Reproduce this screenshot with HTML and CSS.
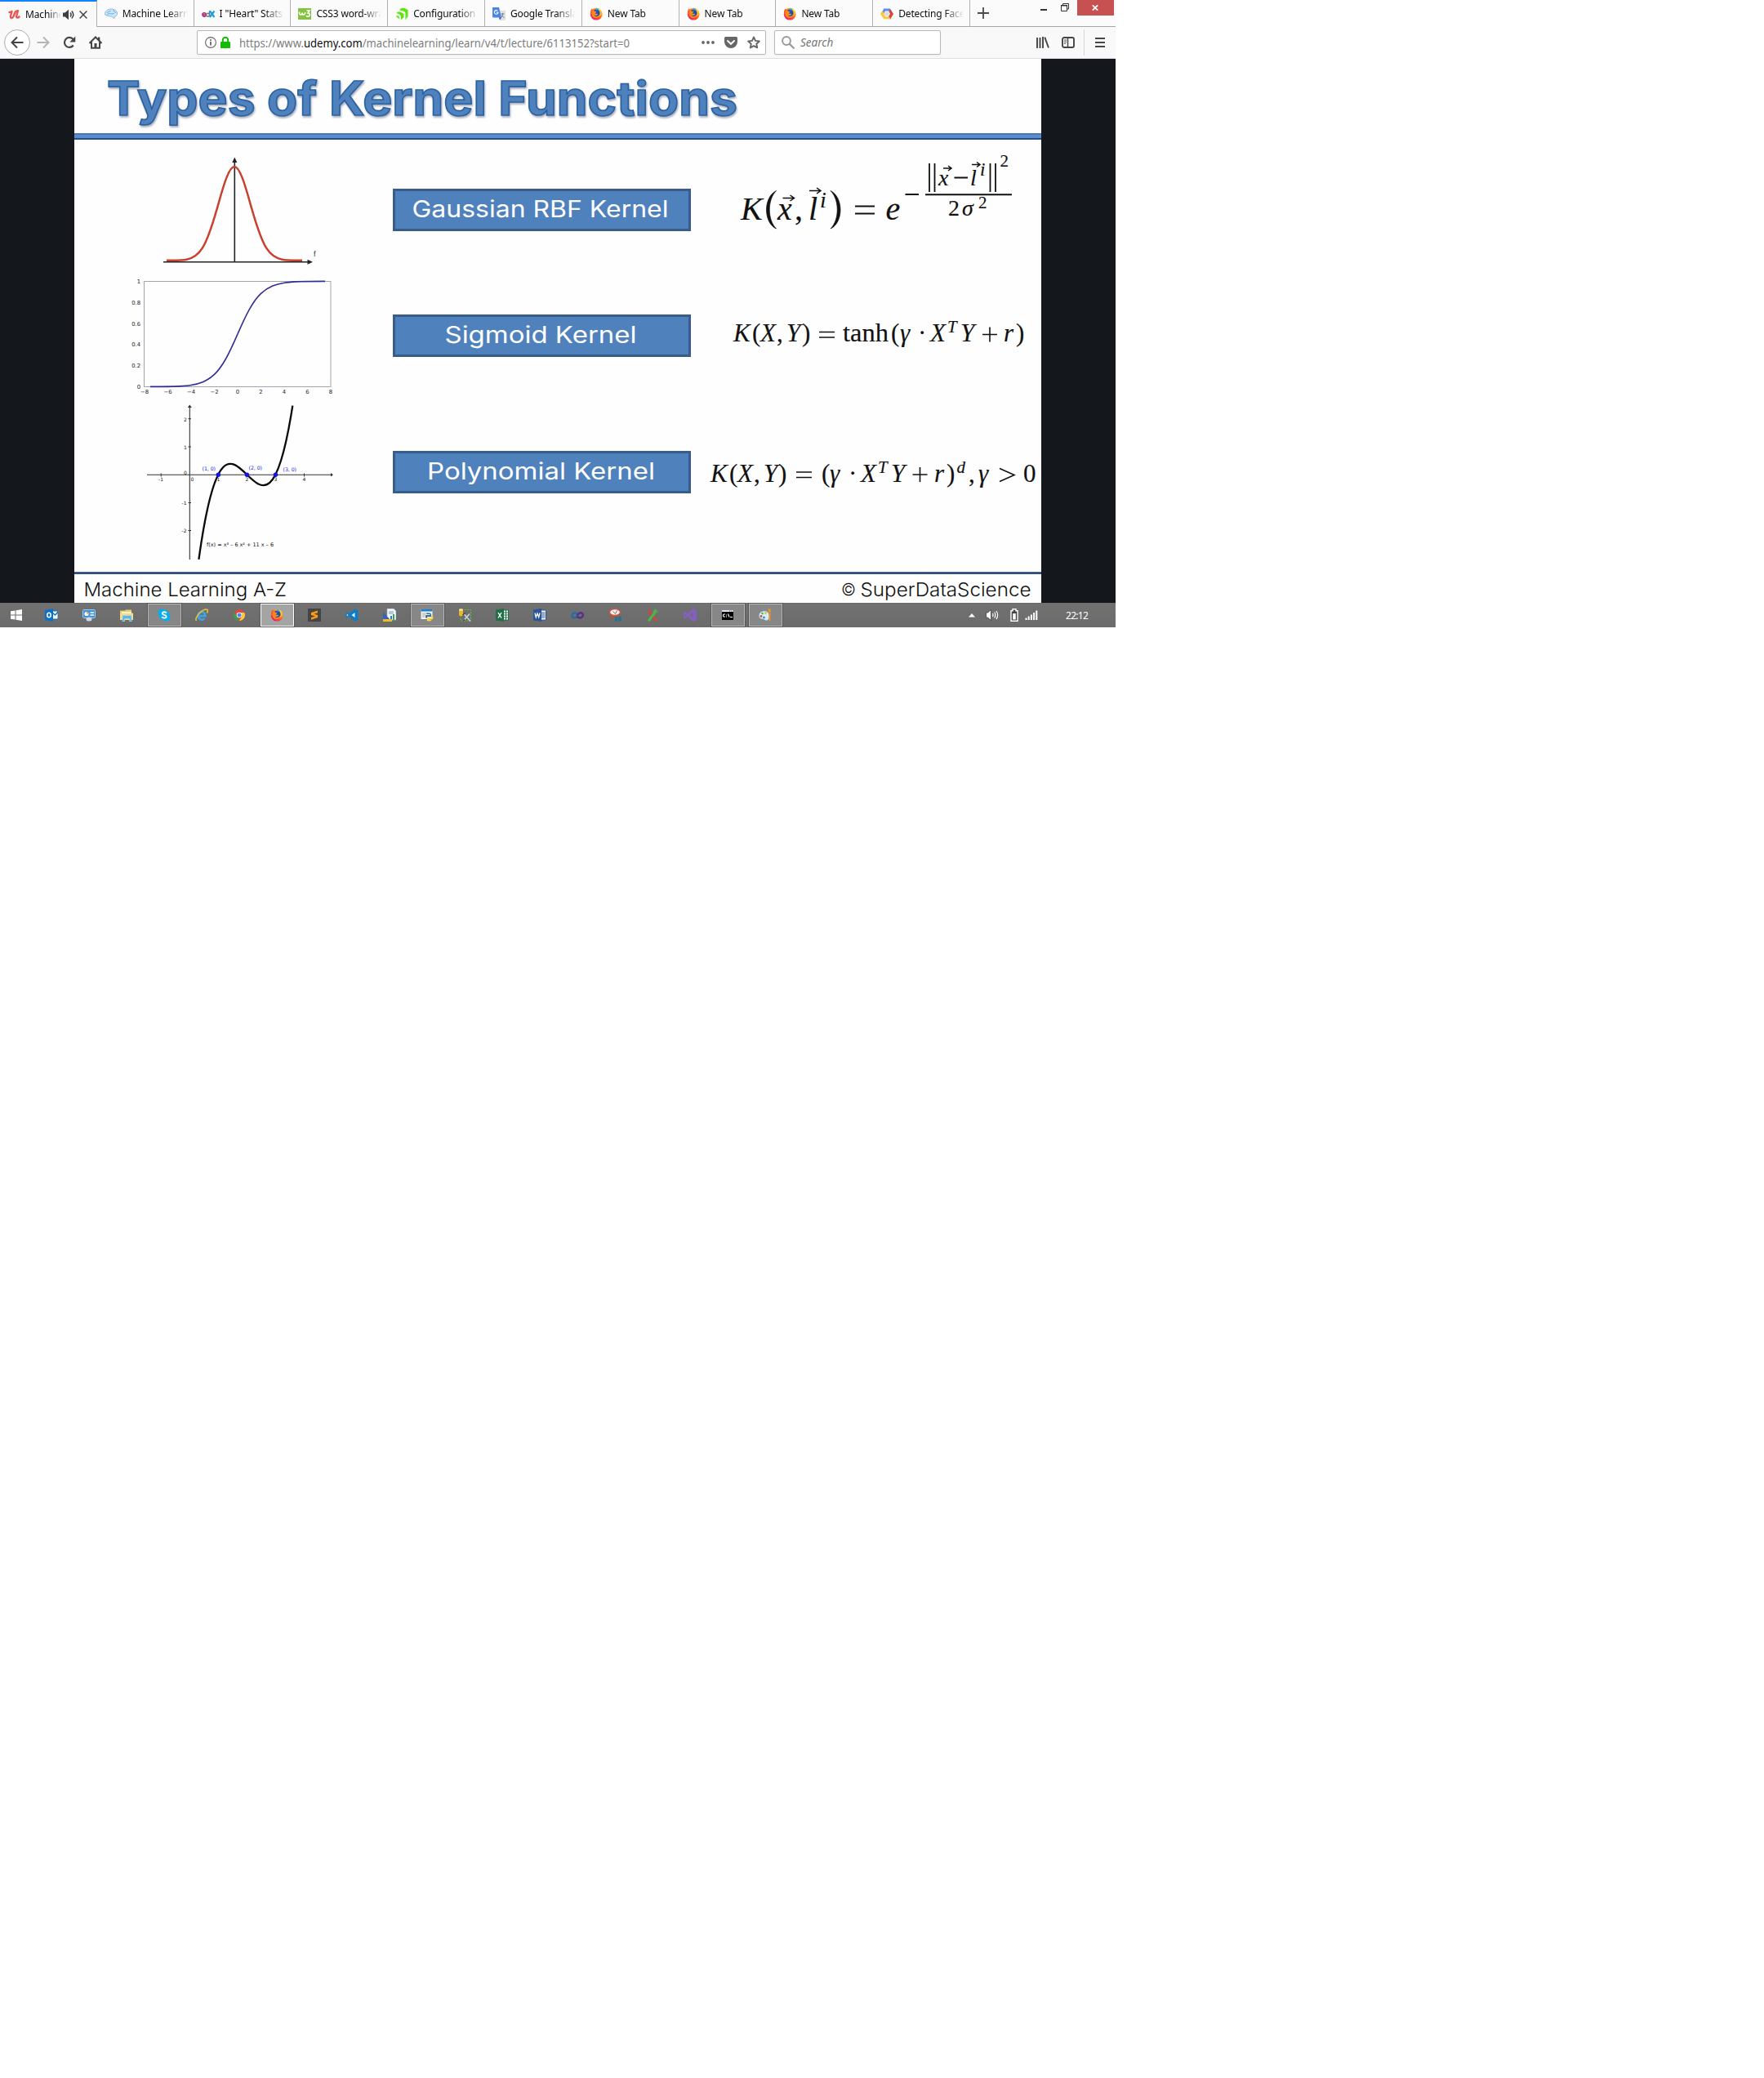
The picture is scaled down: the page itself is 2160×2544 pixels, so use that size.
FILE: index.html
```html
<!DOCTYPE html>
<html lang="en">
<head>
<meta charset="utf-8">
<title>Machine Learning A-Z</title>
<link rel="stylesheet" href="styles.css">
</head>
<body>
<svg class="defs" width="0" height="0" aria-hidden="true">
  <defs>
    <radialGradient id="foxg" cx="0.75" cy="0.2" r="0.95"><stop offset="0" stop-color="#ffe226"/><stop offset="0.4" stop-color="#ff9a18"/><stop offset="0.75" stop-color="#ff3b3b"/><stop offset="1" stop-color="#e3127c"/></radialGradient>
    <symbol id="firefox" viewBox="0 0 16 16">
      <circle cx="8.2" cy="8.2" r="7.4" fill="url(#foxg)"/>
      <path d="M1 8C.6 4.500 1.800 2.600 3 1.300c0 .9.2 1.300.6 1.700L1.800 9z" fill="#ff5a22"/>
      <circle cx="8.300" cy="6.800" r="4.300" fill="#1c4fb4"/>
      <path d="M8 .8c2 .3 3.600 1.500 4 3.200-1.500-.7-2.800-1-4-.2z" fill="#38a9f0"/>
      <path d="M3.200 4.200c1.300-.5 2.300-.2 3.100.5 1.200 0 2 .3 2.200.8-.4.900-1.500 1.100-2 1.900.8.800 2.200.2 3.200.5.5.2.400.700 0 1-1 .9-3 1.500-4.300.7.700 1.700 3.500 2.300 5.600 1C10 13.500 5.500 13.800 3.600 11 2.300 9 2.300 6.300 3.200 4.200z" fill="#ff8a1c"/>
      <path d="M10.500 2.500c2.600 1.800 3.300 5.200 1.600 8.200 1.300-.7 2-1.600 2.300-2.700C14.500 5.300 13 3 10.500 2.500z" fill="#ffc51f"/>
    </symbol>
  </defs>
</svg>

<div class="screen">
  <header class="browser">
    <div class="tabs">
      <div class="tab active">
        <svg class="fav" viewBox="0 0 16 16"><path d="M1.500 5.500 5.500 4 4 9.500c-.5 3 2 3.500 3.500.5L10 4l3-1-1.800 6.500c-.5 3 2 2.800 4 .3" fill="none" stroke="#eb5252" stroke-width="2.300" stroke-linejoin="round"/></svg>
        <span class="label">Machine Learning</span>
        <svg class="sound" viewBox="0 0 14 14"><path d="M0 4.500h2.600L7 .8v12.400L2.600 9.500H0z" fill="#3f3f3f"/><path d="M9 4.500c1.300 1.500 1.300 3.500 0 5M10.800 2.600c2.500 2.700 2.500 6.100 0 8.800" fill="none" stroke="#3f3f3f" stroke-width="1.500"/></svg>
        <svg class="x" viewBox="0 0 10 10"><path d="M.6.6 9.400 9.400M9.400.6.6 9.400" stroke="#3f3f3f" stroke-width="1.400"/></svg>
      </div>
      <div class="tab">
        <svg class="fav" viewBox="0 0 16 16"><path d="M.5 9C0 4.500 4 2 8 2c5 0 8 2.500 7.500 6.500-.5 2-2.500 2-3 3.500l-1 2-1.500-2.500C7 10.500 4 11 .5 9z" fill="#cfe6f6" stroke="#86bde4"/><path d="M3 7c1-3 4-1 5-3M6 8c2-1 4 1 6-1M10 4c2 0 3 1 3.500 3M3 9l3-2" fill="none" stroke="#5fa3d6" stroke-width=".9"/></svg>
        <span class="label">Machine Learning</span>
      </div>
      <div class="tab">
        <svg class="fav" viewBox="0 0 16 16"><path d="M1 9h4c0-3-4-3-4 0 0 2.600 3 2.600 4 1.300" fill="none" stroke="#b4246f" stroke-width="1.700"/><circle cx="7.600" cy="9.300" r="2" fill="none" stroke="#7c7c86" stroke-width="1.500"/><path d="M9.500 4v7" stroke="#7c7c86" stroke-width="1.400"/><path d="M10 4.500 15.500 12M15.500 4.500 9.800 12" stroke="#1a9fe0" stroke-width="2.200"/></svg>
        <span class="label">I "Heart" Stats: Learn</span>
      </div>
      <div class="tab">
        <svg class="fav" viewBox="0 0 16 16"><path d="M0 1h16v14H0z" fill="#84c341"/><path d="M1.500 5.500c0 5 3.500 4 3.500 1 0 3 3.500 4 3.700-.5M10.500 4H14l-2 3c3 0 3 4 0 4.300-1 0-1.500-.3-2-1" fill="none" stroke="#fff" stroke-width="1.500"/></svg>
        <span class="label">CSS3 word-wrap</span>
      </div>
      <div class="tab">
        <svg class="fav" viewBox="0 0 16 16"><path d="M5 3.500C6 1.500 8 .5 10.500.8L15.500 3v8l-3 4.500V6.500L10 4.500z" fill="#5be60e"/><path d="M1.500 7C3 5.500 5 5.300 7 6l3.500 2v4L7 15.500v-5L5 8.500z" fill="#5be60e"/><path d="M.8 11c1.200-1 2.500-.9 3.700 0l.7 3.500z" fill="#5be60e"/></svg>
        <span class="label">Configuration · webpack</span>
      </div>
      <div class="tab">
        <svg class="fav" viewBox="0 0 16 16"><path d="M7 4h9v12H9z" fill="#dfe0e3"/><path d="M10.500 8h4M12.500 7v1c0 2-1 4-2.500 5M11 9.500l3.500 3.500" stroke="#6f8490" stroke-width="1" fill="none"/><path d="M0 0h8l3 12.500H1.200Q0 12.500 0 11z" fill="#4a86ea"/><path d="M8 12.500h3L9 15.500z" fill="#2d4fb5"/><path d="M6.300 4.300a2.300 2.300 0 1 0 .6 2H4.800" fill="none" stroke="#fff" stroke-width="1.100"/></svg>
        <span class="label">Google Translate</span>
      </div>
      <div class="tab"><svg class="fav"><use href="#firefox"/></svg><span class="label">New Tab</span></div>
      <div class="tab"><svg class="fav"><use href="#firefox"/></svg><span class="label">New Tab</span></div>
      <div class="tab"><svg class="fav"><use href="#firefox"/></svg><span class="label">New Tab</span></div>
      <div class="tab">
        <svg class="fav" viewBox="0 0 16 16"><path d="M4.200 1.500h7.600l1.900 3.300-2.300 1.400L10 4.500H6L4.500 7.500 2 6z" fill="#5a8ff0"/><path d="M12.200 2.200 16 8l-3.800 6.500L9.500 12l2.500-4-1.500-3z" fill="#dc4437"/><path d="M0 8 2.200 4.500 5 7l-.7 1L6.200 11.500H11l1 2.800H4.200z" fill="#f8c73a"/><circle cx="8" cy="8" r="2.800" fill="#d9dce2"/></svg>
        <span class="label">Detecting Faces</span>
      </div>
      <div class="tabend">
        <svg class="plus" viewBox="0 0 14 14"><path d="M7 0v14M0 7h14" stroke="#4a4a4a" stroke-width="1.800"/></svg>
        <svg class="min" viewBox="0 0 8 2"><path d="M0 0h8v2H0z" fill="#333"/></svg>
        <svg class="restore" viewBox="0 0 10 10"><path d="M.5 3h7v6.500h-7zM2.500 2.500V.5h7V7H8" fill="none" stroke="#333"/><path d="M0 2.500h8" stroke="#333"/></svg>
        <div class="close"><svg viewBox="0 0 8 7" width="8" height="7"><path d="M.8.3 7.200 6.700M7.200.3.8 6.700" stroke="#fff" stroke-width="1.700"/></svg></div>
      </div>
    </div>
    <div class="nav">
      <div class="back"><svg viewBox="0 0 16 16"><path d="M15.500 8H1.500M8 1.500 1.500 8 8 14.500" fill="none" stroke="#454545" stroke-width="2"/></svg></div>
      <svg class="ic fwd" viewBox="0 0 16 16"><path d="M.5 8h14M8 1.500 14.500 8 8 14.500" fill="none" stroke="#b5b5b5" stroke-width="2"/></svg>
      <svg class="ic reload" viewBox="0 0 16 16"><path d="M12.800 11.500A6 6 0 1 1 12.500 4" fill="none" stroke="#454545" stroke-width="2.200"/><path d="M15.300.5v7h-7z" fill="#454545"/></svg>
      <svg class="ic home" viewBox="0 0 16 16"><path d="M.5 9 8 1.500 15.500 9M3 7.500v7.300h10V7.500" fill="none" stroke="#454545" stroke-width="2"/><path d="M6.500 9h3v6h-3zM11 1.500h2.300V6L11 4z" fill="#454545"/></svg>
      <div class="urlbar">
        <svg class="info" viewBox="0 0 14 14"><circle cx="7" cy="7" r="6.400" fill="none" stroke="#666" stroke-width="1.100"/><path d="M6.100 6h1.800v4.500H6.100zM6.100 3.200h1.800V5H6.100z" fill="#666"/></svg>
        <svg class="lock" viewBox="0 0 12 14"><path d="M2.800 7V4a3.200 3.200 0 0 1 6.400 0v3" fill="none" stroke="#12bc00" stroke-width="2"/><rect y="6" width="12" height="8" rx="1" fill="#12bc00"/></svg>
        <svg class="url" width="560" height="28" viewBox="293 38 560 28"><text x="293" y="58" textLength="478" lengthAdjust="spacingAndGlyphs">https://www.<tspan class="host">udemy.com</tspan>/machinelearning/learn/v4/t/lecture/6113152?start=0</text></svg>
        <svg class="dots" viewBox="0 0 16 4"><circle cx="2" cy="2" r="1.900"/><circle cx="8" cy="2" r="1.900"/><circle cx="14" cy="2" r="1.900"/></svg>
        <svg class="pocket" viewBox="0 0 16 14"><path d="M1.500 0h13Q16 0 16 1.500V6a8 8 0 0 1-16 0V1.500Q0 0 1.500 0z" fill="#666"/><path d="m4 5 4 3.800L12 5" fill="none" stroke="#fff" stroke-width="2" stroke-linecap="round"/></svg>
        <svg class="star" viewBox="0 0 16 16"><path d="m8 1.500 2 4.400 4.800.6-3.500 3.200.9 4.700L8 12.100l-4.200 2.300.9-4.700L1.200 6.500 6 5.900z" fill="none" stroke="#666" stroke-width="1.900" stroke-linejoin="round"/></svg>
      </div>
      <div class="search">
        <svg class="lens" viewBox="0 0 16 16"><circle cx="6" cy="6" r="4.900" fill="none" stroke="#999" stroke-width="2"/><path d="m9.600 9.600 5.900 5.900" stroke="#999" stroke-width="2.200"/></svg>
        <span>Search</span>
      </div>
      <svg class="lib" viewBox="0 0 16 14"><path d="M1 1v13M4.500 1v13M8 0v14M10.300.6 15 13.500" stroke="#454545" stroke-width="1.900"/></svg>
      <svg class="side" viewBox="0 0 16 14"><rect x="1" y="1" width="14" height="12" rx="2" fill="none" stroke="#454545" stroke-width="1.900"/><path d="M7.500 1v12" stroke="#454545" stroke-width="1.500"/><path d="M3 4h3M3 6.200h3M3 8.400h2" stroke="#454545"/></svg>
      <i class="vsep"></i>
      <svg class="menu" viewBox="0 0 12 12"><path d="M0 1h12M0 6h12M0 11h12" stroke="#454545" stroke-width="2"/></svg>
    </div>
  </header>

  <main class="player">
    <section class="slide">
      <svg class="title" width="1184" height="91" viewBox="91 72 1184 91"><text x="131" y="140.500" textLength="772" lengthAdjust="spacingAndGlyphs">Types of Kernel Functions</text></svg>
      <div class="rule"></div>
      <div class="body">
        <svg class="charts" width="369" height="529" viewBox="91 171 369 529">
          <path d="M287.300 320.500V199" stroke="#222" stroke-width="1.600"/>
          <path d="m287.300 192.500 3 6.500h-6zM383 320.800l-6.500-3v6z" fill="#222"/>
          <path d="M200 320.800h178" stroke="#222" stroke-width="1.500"/>
          <path d="M204 318.700C214 318.700 222 319 228.500 317.700 235 316.400 241.500 313.800 248 303.400 254.500 293 261 272.600 267.500 249.300 274 226 280.500 204 287 204S300 226 306.500 249.300C313 272.600 319.500 293 326 303.400 332.500 313.800 339 316.400 345.500 317.700 352 319 360 318.700 370 318.700" fill="none" stroke="#c8402e" stroke-width="2.500"/>
          <text class="f" x="384" y="314">f</text>
          <rect x="176.500" y="344.500" width="228.500" height="129" fill="none" stroke="#a3a3ad"/>
          <g fill="none" stroke="#322d92" stroke-width="1.600">
            <path id="sg" d="M291 408.900C295.800 397.900 300.500 387.300 305.300 378.800 310.100 370.300 314.700 363.900 319.500 359.400 324.300 354.900 329 352.100 333.800 350.100 338.600 348.100 343.300 347.100 348.100 346.300 352.900 345.500 357.600 345.200 362.400 344.900 374 344.400 386 344.400 398 344.400"/>
            <use href="#sg" transform="rotate(180 291 408.900)"/>
          </g>
          <g class="tick" text-anchor="end"><text x="172" y="346.500">1</text><text x="172" y="372.500">0.8</text><text x="172" y="398.500">0.6</text><text x="172" y="424">0.4</text><text x="172" y="450">0.2</text><text x="172" y="475.500">0</text></g>
          <g class="tick" text-anchor="middle"><text x="177" y="482">−8</text><text x="205.500" y="482">−6</text><text x="234" y="482">−4</text><text x="262.500" y="482">−2</text><text x="291" y="482">0</text><text x="319.500" y="482">2</text><text x="348" y="482">4</text><text x="376.500" y="482">6</text><text x="405" y="482">8</text></g>
          <path d="M180 581.300h226M232.300 685V498" stroke="#333" stroke-width="1.100"/>
          <path d="m229.800 499 2.500-3.500 2.500 3.500zM405 579l3 2.300-3 2.300z" fill="#333"/>
          <path d="M197.200 579.500v4M372.500 579.500v4M230.500 512.700h3.500M230.500 547h3.500M230.500 615.500h3.500M230.500 649.500h3.500" stroke="#333"/>
          <g class="tiny"><text x="194" y="588.500">-1</text><text x="233.500" y="588.500">0</text><text x="265.500" y="588.500">1</text><text x="300.500" y="588.500">2</text><text x="335.500" y="588.500">3</text><text x="370.500" y="588.500">4</text><text x="225" y="515.500">2</text><text x="225" y="550">1</text><text x="225" y="580.500">0</text><text x="222.500" y="618">-1</text><text x="222.500" y="652">-2</text></g>
          <path d="M243.400 684.900C281.700 407.400 320 744.400 358.300 496.600" fill="none" stroke="#0a0a0a" stroke-width="2.300"/>
          <g fill="#1414e6"><circle cx="267.300" cy="581.300" r="2.700"/><circle cx="302.400" cy="581.300" r="2.700"/><circle cx="337.400" cy="581.300" r="2.700"/></g>
          <g class="pt"><text x="247.500" y="576" textLength="16.500">(1, 0)</text><text x="304.500" y="575" textLength="16.500">(2, 0)</text><text x="346.500" y="577" textLength="16.500">(3, 0)</text></g>
          <text class="fx" x="253" y="668.500" textLength="82" lengthAdjust="spacingAndGlyphs">f(x) = x³ – 6 x² + 11 x – 6</text>
        </svg>
        <div class="kernels">
          <div class="kernel"><svg width="359" height="46" viewBox="484 234 359 46"><text x="504.500" y="265.500" textLength="314" lengthAdjust="spacingAndGlyphs">Gaussian RBF Kernel</text></svg></div>
          <div class="kernel"><svg width="359" height="46" viewBox="484 234 359 46"><text x="544.500" y="265.500" textLength="235" lengthAdjust="spacingAndGlyphs">Sigmoid Kernel</text></svg></div>
          <div class="kernel"><svg width="359" height="46" viewBox="484 234 359 46"><text x="523" y="265.500" textLength="279" lengthAdjust="spacingAndGlyphs">Polynomial Kernel</text></svg></div>
        </div>
        <svg class="math" width="419" height="529" viewBox="856 171 419 529">
          <text class="big" y="269"><tspan x="907">K</tspan><tspan x="952">x</tspan><tspan class="up" x="973">,</tspan><tspan x="990">l</tspan><tspan class="i1" x="1004" y="254">i</tspan><tspan x="1084.500" y="269">e</tspan></text>
          <text class="mid" y="226.500"><tspan x="1149">x</tspan><tspan x="1188">l</tspan><tspan class="i2" x="1200" y="215">i</tspan><tspan class="s2" x="1224.500" y="204">2</tspan></text>
          <text class="mid" y="264"><tspan class="up" x="1161">2</tspan><tspan x="1178">σ</tspan><tspan class="s2" x="1198" y="255">2</tspan></text>
          <path d="M950.500 233.500c-16 8-16 39 0 46.500-11-11-11-35.500 0-46.500zM1017 233.500c16 8 16 39 0 46.500 11-11 11-35.500 0-46.500z" fill="#111" stroke="#111" stroke-width=".7"/>
          <path d="M1047 252.500h24M1047 261.500h24M1108.500 238h16.500M1133 238.300h106M1168.500 217.500h16.500" stroke="#111" stroke-width="2"/>
          <path d="M1138 200v35M1144.500 200v35M1212.500 200v35M1219 200v35" stroke="#111" stroke-width="1.800"/>
          <path d="M958.500 242.500h13M967.500 239l5 3.500-5 3.500M991 233.500h13M1000 230l5 3.500-5 3.500M1155 206h9.500M1161 203l4 3-4 3M1190 201.500h9M1196 198.500l4 3-4 3" fill="none" stroke="#111" stroke-width="1.500"/>
          <text class="eq" y="418"><tspan x="898">K</tspan><tspan class="up" x="921">(</tspan><tspan x="931">X</tspan><tspan class="up" x="951">,</tspan><tspan x="963">Y</tspan><tspan class="up" x="982">)</tspan><tspan class="up" x="1032" textLength="56" lengthAdjust="spacingAndGlyphs">tanh</tspan><tspan class="up" x="1091">(</tspan><tspan x="1102">γ</tspan><tspan class="up" x="1124">·</tspan><tspan x="1139">X</tspan><tspan class="sup" x="1160" y="407">T</tspan><tspan x="1176" y="418">Y</tspan><tspan x="1229">r</tspan><tspan class="up" x="1244">)</tspan></text>
          <text class="eq" y="590"><tspan x="870">K</tspan><tspan class="up" x="893">(</tspan><tspan x="903">X</tspan><tspan class="up" x="923">,</tspan><tspan x="935">Y</tspan><tspan class="up" x="953">)</tspan><tspan class="up" x="1006">(</tspan><tspan x="1016">γ</tspan><tspan class="up" x="1039">·</tspan><tspan x="1054">X</tspan><tspan class="sup" x="1075" y="579">T</tspan><tspan x="1091" y="590">Y</tspan><tspan x="1144">r</tspan><tspan class="up" x="1159">)</tspan><tspan class="sup" x="1171.500" y="579">d</tspan><tspan class="up" x="1186" y="590">,</tspan><tspan x="1198">γ</tspan><tspan class="up" x="1253">0</tspan></text>
          <path d="M1003 406.500h19M1003 413h19M1203 409.500h18M1212 400.500v18M975 578h19M975 584.500h19M1117.500 581h18M1126.500 572v18" stroke="#111" stroke-width="1.600"/>
          <path d="m1224 573.500 18 8-18 8" fill="none" stroke="#111" stroke-width="1.600"/>
        </svg>
      </div>
      <div class="footline"></div>
      <svg class="foot" width="1184" height="35" viewBox="91 703 1184 35"><text x="102.500" y="729.800" textLength="248.500" lengthAdjust="spacingAndGlyphs">Machine Learning A-Z</text><text x="1030" y="729" textLength="18" lengthAdjust="spacingAndGlyphs" class="copy">©</text><text x="1053.500" y="729.800" textLength="209" lengthAdjust="spacingAndGlyphs">SuperDataScience</text></svg>
    </section>
  </main>

  <footer class="taskbar">
    <div class="start"><svg viewBox="0 0 16 16"><path d="M1 3.200 6.500 2.400v5H1zM7.500 2.200 15 1v6.400H7.500zM1 8.500h5.500v5L1 12.700zM7.500 8.500H15V15l-7.500-1.200z" fill="#fff"/></svg></div>
    <div class="app"><svg viewBox="0 0 16 16"><path d="M9 3h7v10H9z" fill="#fff" stroke="#0a72c6"/><path d="m9 5 3.500 3L16 4" fill="none" stroke="#0a72c6" stroke-width="1.500"/><path d="M0 2 10 0v16L0 14z" fill="#0a72c6"/><ellipse cx="5" cy="8" rx="2.200" ry="2.800" fill="none" stroke="#fff" stroke-width="1.500"/></svg></div>
    <div class="app"><svg viewBox="0 0 16 16"><rect x=".5" y="1.500" width="15" height="10" rx="1" fill="#3f93dc" stroke="#9dccf2"/><circle cx="5" cy="6.500" r="2.600" fill="#fff"/><path d="M5 6.500V4a2.500 2.500 0 0 1 2.500 2.500z" fill="#f39a28"/><path d="M9.500 5H14M9.500 8H14" stroke="#fff" stroke-width="1.400"/><ellipse cx="8" cy="13" rx="3.500" ry="2.500" fill="#d5d9de"/></svg></div>
    <div class="app"><svg viewBox="0 0 16 16"><path d="M0 2.500h6l1-1h7v4h2V14H0z" fill="#e9cc70"/><path d="M2 4h12v3H2z" fill="#fbf4c4"/><path d="M0 6h16v8H0z" fill="#f2dc8c"/><path d="M3 8.500h11V16h-2.500v-3.500h-6V16H3z" fill="#62b5e0" stroke="#a6dbf0" stroke-width=".6"/></svg></div>
    <div class="app open"><svg viewBox="0 0 16 16"><circle cx="5" cy="5" r="4.500" fill="#00aff0"/><circle cx="11" cy="11" r="4.500" fill="#00aff0"/><circle cx="8" cy="8" r="6.500" fill="#00aff0"/><path d="M10.800 5.500C9.500 3.500 5.500 4 5.700 6.200c.2 2.300 5 1.200 5 3.600 0 2.300-4.200 2.400-5.400.3" fill="none" stroke="#fff" stroke-width="1.800"/></svg></div>
    <div class="app"><svg viewBox="0 0 16 16"><path d="M4 9.200h8.500A4.500 4.800 0 1 0 11.500 12" fill="none" stroke="#3ba4e8" stroke-width="2.700"/><path d="M1.500 15C-1 11.500 7.500 1 14 1c2 .3 1.500 2.500.5 4.500" fill="none" stroke="#f0bf2c" stroke-width="1.600"/></svg></div>
    <div class="app"><svg viewBox="0 0 16 16"><circle cx="8" cy="8" r="7" fill="#e04a3a"/><path d="M1.900 4.500 6 11.500 8 15A7 7 0 0 1 1.900 4.500z" fill="#2da44e"/><path d="M8 15 11.500 9 10 5h4.300A7 7 0 0 1 8 15z" fill="#fbce36"/><circle cx="8" cy="8" r="3.300" fill="#fff"/><circle cx="8" cy="8" r="2.500" fill="#4a8af4"/></svg></div>
    <div class="app current"><svg><use href="#firefox"/></svg></div>
    <div class="app"><svg viewBox="0 0 16 16"><path d="M0 0h16v16H0z" fill="#454545"/><path d="m12 2.500-8 2.600v3l5 1.400-5 1.500v2.800L12 11V8L7.500 6.500 12 5.300z" fill="#ff9b12"/></svg></div>
    <div class="app"><svg viewBox="0 0 16 16"><path d="M11 .5 15.500 2.500v11L11 15.500 4.500 9.500 2 11.500.3 10.500v-5L2 4.500l2.500 2z" fill="#0c7cc8"/><path d="M11.500 5v6L7.500 8zM1.800 6.500v3L3.500 8z" fill="#e7eef4"/></svg></div>
    <div class="app"><svg viewBox="0 0 16 16"><path d="M5 0h8l3 3v11H5z" fill="#f4f7fa" stroke="#9aa9bd" stroke-width=".7"/><path d="M7 4h6M7 6h6" stroke="#7f94b0"/><path d="M9 9h2v5H9z" fill="#2f77ca"/><path d="M12 7h2v7h-2z" fill="#32a94b"/><path d="M0 4v10h9z" fill="#3a61b5"/><path d="M0 13h11v3H0z" fill="#e8bc32"/></svg></div>
    <div class="app open"><svg viewBox="0 0 16 16"><path d="M.5 1h14v12H.5z" fill="#f2f2ef"/><path d="M.5 1h14v2.500H.5z" fill="#1583d2"/><path d="M2 6h8M2 8h4M2 10h3" stroke="#b0b0a6"/><path d="M7.500 5.500h3.500q2 0 2 2V10H9q-1.500 0-1.500 2H7q-2-1.500-.5-4h5V7h-4z" fill="#34729f"/><path d="M13 8.500h1q2.500 2 1 4H11v1h3q-1 2.500-4 2T8 14v-1.500q0-1.500 1.500-1.500H12q1 0 1-1z" fill="#ffd544"/></svg></div>
    <div class="app"><svg viewBox="0 0 16 16"><path d="M4 1.500h11.500V15H3V9" fill="none" stroke="#62c62c" stroke-dasharray="2 1.500"/><path d="M1 1.500v7q2.500 1.500 5 0v-7z" fill="#ebb529"/><ellipse cx="3.500" cy="1.500" rx="2.500" ry="1.200" fill="#ffe897"/><path d="m6 15.500 8-9M7 6.500l8 9" stroke="#c5d2dc" stroke-width="1.600"/><path d="m5.500 8 3-2.500M6 15.500l2-2" stroke="#394350" stroke-width="1.500"/></svg></div>
    <div class="app"><svg viewBox="0 0 16 16"><path d="M9 2h6.500v12H9z" fill="#fff" stroke="#1e7145"/><path d="M10 5h5M10 8h5M10 11h5M12.500 2v12" stroke="#1e7145"/><path d="M0 1.500 10 0v16L0 14.500z" fill="#1e7145"/><path d="m3 5 4 6.500M7 5l-4 6.500" stroke="#fff" stroke-width="1.400"/></svg></div>
    <div class="app"><svg viewBox="0 0 16 16"><path d="M9 2h6.500v12H9z" fill="#fff" stroke="#2a5699"/><path d="M10 5h4.500M10 7h4.500M10 9h4.500M10 11h4.500" stroke="#2a5699"/><path d="M0 1.500 10 0v16L0 14.500z" fill="#2a5699"/><path d="m2 5.500 1.300 5L5 6l1.700 4.500 1.300-5" fill="none" stroke="#fff" stroke-width="1.300"/></svg></div>
    <div class="app"><svg viewBox="0 0 16 16"><path d="M8.500 7.500C6.500 4.500 1.500 5 1.500 8.500s5 4 7-.5" fill="none" stroke="#286b9f" stroke-width="2.300"/><path d="M7.500 9.500c2 3 7.300 2.300 7.300-1.500s-4.800-4-6.800.5" fill="none" stroke="#562d91" stroke-width="2.300"/></svg></div>
    <div class="app"><svg viewBox="0 0 16 16"><ellipse cx="8" cy="4.500" rx="6.500" ry="4" fill="#f2eeee" stroke="#d4543c" stroke-width="1.500"/><path d="m5.500 3.500 3 3 2-4" stroke="#777" fill="none"/><path d="M2 9.500q4 3 9-1" fill="none" stroke="#cc4a34" stroke-width="2"/><path d="M8.500 11h2v4h-2zM13 10.500h2v4h-2z" fill="none" stroke="#17739f" stroke-width="1.300"/></svg></div>
    <div class="app"><svg viewBox="0 0 16 16"><path d="M3 1.500C5 4 5.500 6 8 9s3.500 4 5 6.500" fill="none" stroke="#e0402f" stroke-width="2.400"/><path d="M3.500 15.500C5 10 9.500 9.500 11.500 3" fill="none" stroke="#49b648" stroke-width="3.200"/><path d="m8.500 3.500 3.300-3.500L15 5z" fill="#49b648"/></svg></div>
    <div class="app"><svg viewBox="0 0 16 16"><path d="m11.500 0 4.500 2v12l-4.500 2L5 9.800 1.500 12.500 0 11.800V4.200l1.500-.7L5 6.200zM11.500 4.800 7.500 8l4 3.200zM1.700 6v4l2-2z" fill="#865fc5" fill-rule="evenodd"/></svg></div>
    <div class="app open"><svg viewBox="0 0 16 16"><path d="M1 2h14v12H1z" fill="#000"/><path d="M1 2h14v2H1z" fill="#dfe5ee"/><path d="M10 3h1M12 3h1M14 3h.7" stroke="#5a6f9b"/><path d="M5 7H3.500Q2.500 7 2.500 8v1q0 1 1 1H5M6.500 7.500v1M6.500 9.500v1M8.500 6.500 10 10.500M11 10.500h3" fill="none" stroke="#fff" stroke-width="1.100"/></svg></div>
    <div class="app open"><svg viewBox="0 0 16 16"><path d="M7 3C2 3-.5 7 .8 10.500 2 14 5.500 12 7.500 14c3 1.500 6-.5 5.500-5C12.700 5 10.500 3 7 3z" fill="#d7ecf5" stroke="#72b4d4" stroke-width=".7"/><circle cx="3" cy="9.500" r="1.400" fill="#e54836"/><circle cx="4.500" cy="6" r="1.300" fill="#4ab43e"/><circle cx="8.500" cy="5.500" r="1.400" fill="#f0be23"/><circle cx="6.500" cy="11" r="1.300" fill="#2f7ed8"/><path d="M12.500 5.500h2V15h-2zM11 1l3.500-1L15 3l-1.500 3-1-2z" fill="#ea922f"/></svg></div>
    <div class="tray">
      <svg class="up-arrow" viewBox="0 0 8 5"><path d="M4 0 8 4.500H0z" fill="#fff"/></svg>
      <svg class="vol" viewBox="0 0 16 14"><path d="M.5 4h2L6.500.5v13L2.500 10h-2z" fill="#fff" stroke="#333" stroke-width=".7"/><path d="M8.500 5q1 2 0 4M10.700 3.500q2.200 3.500 0 7M13 2q3.300 5 0 10" fill="none" stroke="#fff" stroke-width="1.200"/></svg>
      <svg class="bat" viewBox="0 0 10 16"><path d="M3 .7h4v2h2v12.600H1V2.700h2z" fill="#444" stroke="#fff" stroke-width="1.400"/><path d="M3.200 6h3.600v7.500H3.200z" fill="#fff"/></svg>
      <svg class="sig" viewBox="0 0 16 12"><path d="M.5 9.500h2V12h-2zM3.700 7.500h2V12h-2zM6.900 5.500h2V12h-2zM10.100 3h2v9h-2zM13.300.5h2V12h-2z" fill="#fff"/></svg>
      <span class="clock">22:12</span>
    </div>
  </footer>
</div>
</body>
</html>
```

FILE: styles.css
```css
* { box-sizing: border-box; }
body { margin: 0; background: #fff; font-family: "Noto Sans", "Open Sans", sans-serif; }
svg { display: block; flex: none; }
.defs { position: absolute; }
.screen { width: 1366px; height: 768px; display: flex; flex-direction: column; overflow: hidden; }

.browser { height: 72px; background: #f9f9fa; border-bottom: 1px solid #dedede; }
.tabs { display: flex; height: 33px; }
.tab {
  width: 118.8px; height: 33px; flex: none; display: flex; align-items: center; gap: 6px;
  padding: 1px 7px 0 9px; border-right: 1px solid #b1b1b1; border-bottom: 1px solid #a6a6a6;
  font-size: 12px; color: #0c0c0d; background: #fbfbfb;
}
.tab.active { border-top: 2px solid #0a84ff; border-bottom: 0; padding-top: 0; background: #f9f9fa; }
.fav { width: 16px; height: 16px; }
.label {
  flex: 1; min-width: 0; overflow: hidden; white-space: nowrap; letter-spacing: -0.15px;
  -webkit-mask-image: linear-gradient(to left, transparent 0, #000 24px);
  mask-image: linear-gradient(to left, transparent 0, #000 24px);
}
.active .label { margin-right: -4px; -webkit-mask-image: linear-gradient(to left, transparent 0, #000 16px); mask-image: linear-gradient(to left, transparent 0, #000 16px); }
.sound { width: 14px; height: 14px; }
.x { width: 10px; height: 10px; margin-right: 4px; }
.tabend { flex: 1; display: flex; align-items: flex-start; border-bottom: 1px solid #a6a6a6; background: #fbfbfb; }
.plus { width: 14px; height: 14px; margin: 9px 0 0 9px; }
.min { width: 8px; height: 2px; margin: 11px 0 0 63px; }
.restore { width: 10px; height: 10px; margin: 4px 0 0 17px; }
.close { width: 45px; height: 19px; margin-left: 10px; background: #c75050; display: flex; align-items: center; justify-content: center; }

.nav { display: flex; align-items: center; height: 38px; padding-left: 5px; }
.back { width: 32px; height: 32px; border: 1px solid #adadad; border-radius: 50%; background: #fff; display: flex; align-items: center; justify-content: center; flex: none; }
.back svg, .ic { width: 16px; height: 16px; }
.fwd { margin-left: 8px; }
.reload, .home { margin-left: 16px; }
.urlbar, .search { height: 30px; border: 1px solid #b8b8b8; border-radius: 2px; background: #fff; display: flex; align-items: center; box-shadow: 0 1px 3px rgba(0, 0, 0, .05); flex: none; }
.urlbar { width: 697px; margin-left: 116px; }
.info { width: 14px; height: 14px; margin-left: 9px; }
.lock { width: 12px; height: 14px; margin-left: 5px; }
.url { margin-left: 11px; font-size: 14px; }
.url text { fill: #7d7d7d; }
.url .host { fill: #0c0c0d; }
.dots { width: 16px; height: 4px; margin-left: 6px; fill: #666; }
.pocket { width: 16px; height: 14px; margin-left: 12px; }
.star { width: 16px; height: 16px; margin-left: 12px; }
.search { width: 204px; margin-left: 10px; font-size: 13.5px; font-style: italic; color: #757575; }
.lens { width: 16px; height: 16px; margin: 0 7px 0 8px; }
.lib { width: 16px; height: 14px; margin-left: 117px; }
.side { width: 16px; height: 14px; margin-left: 15px; }
.vsep { width: 1px; height: 32px; background: #d7d7d7; margin-left: 11px; }
.menu { width: 12px; height: 12px; margin-left: 13px; }

.player { height: 666px; background: #14181d; padding: 0 91px; }
.slide { width: 1184px; height: 666px; background: #fefefe; display: flex; flex-direction: column; }
.title text {
  font: 700 57.5px Inter, sans-serif; fill: #4f81bd; stroke: #2b62a0; stroke-width: 1.6px;
  filter: drop-shadow(1px 2px 1px rgba(40, 50, 90, .4));
}
.rule { height: 8px; flex: none; border-top: 2px solid #5377a9; border-bottom: 2px solid #2c4f83; background: #558ed5; }
.body { display: flex; height: 529px; }
.kernels { width: 396px; padding: 60px 0 0 21px; }
.kernel { width: 365px; height: 52px; border: 3px solid #385d8a; background: #4f81bd; }
.kernel:nth-child(2) { margin-top: 102px; }
.kernel:nth-child(3) { margin-top: 115px; }
.kernel text { font: 400 28.5px Inter, sans-serif; fill: #fff; }
.footline { height: 3px; flex: none; background: #1f3f70; border-top: 1px solid #4f6b96; border-bottom: 1px solid #3f5f8c; }
.foot text { font: 300 23px Inter, sans-serif; fill: #111; }
.foot .copy { font-size: 21px; }

.f { font: 9px "Liberation Sans", sans-serif; fill: #333; }
.tick { font: 6.8px "DejaVu Sans", sans-serif; fill: #222; }
.tiny { font: 6px "DejaVu Sans", sans-serif; fill: #111; }
.pt { font: 6.2px "DejaVu Sans", sans-serif; fill: #1818e0; }
.fx { font: 6.5px "DejaVu Sans", sans-serif; fill: #111; }
.math text { font-family: "Liberation Serif", serif; font-style: italic; fill: #111; stroke: #111; stroke-width: .15px; }
.math .up { font-style: normal; }
.math .big { font-size: 40px; }
.big .i1 { font-size: 28px; }
.math .mid { font-size: 28px; }
.mid .i2 { font-size: 23px; }
.mid .s2 { font-size: 21px; font-style: normal; }
.math .eq { font-size: 31px; }
.eq .sup { font-size: 21px; }

.taskbar { height: 30px; background: linear-gradient(#656565 0, #717171 1px, #6b6b6b 100%); display: flex; gap: 3px; }
.start { width: 39px; display: flex; align-items: center; justify-content: center; }
.app { width: 43px; height: 30px; flex: none; display: flex; align-items: center; justify-content: center; }
.start svg, .app svg { width: 16px; height: 16px; }
.app svg { margin-right: 1px; }
.app.open { background: #878787; border: 1px solid #585858; box-shadow: inset 0 0 0 1px #b4b4b4; }
.app.current { background: #a4a4a4; border: 1px solid #585858; box-shadow: inset 0 0 0 1px #fff; }
.tray { flex: 1; display: flex; align-items: center; justify-content: flex-end; padding-right: 33px; color: #fff; font-size: 12px; }
.up-arrow { width: 8px; height: 5px; }
.vol { width: 16px; height: 14px; margin-left: 13px; }
.bat { width: 10px; height: 16px; margin-left: 14px; }
.sig { width: 16px; height: 12px; margin-left: 8px; }
.clock { width: 28px; margin-left: 34px; letter-spacing: -0.7px; white-space: nowrap; }
```
